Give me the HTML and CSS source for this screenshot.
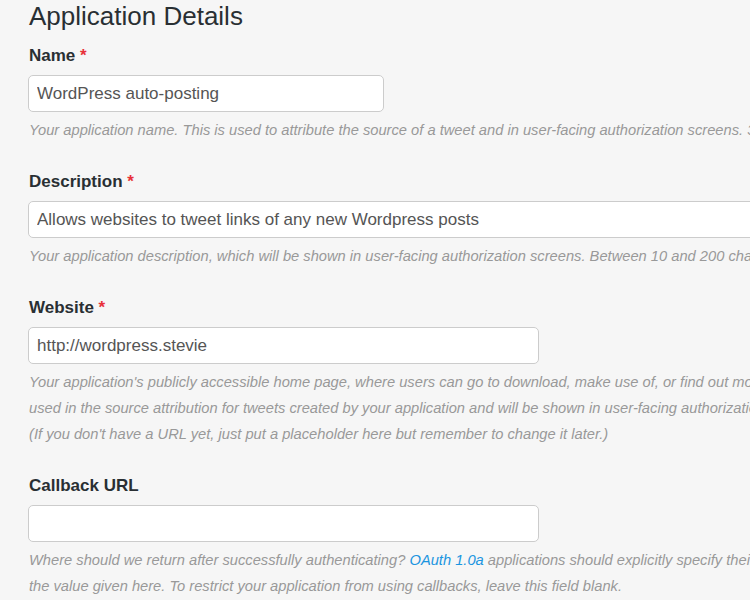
FILE: index.html
```html
<!DOCTYPE html>
<html lang="en">
<head>
<meta charset="utf-8">
<title>Application Details</title>
<link rel="stylesheet" href="styles.css">
</head>
<body>
<div class="page">
  <h1 class="title">Application Details</h1>
  <div class="group">
    <label class="label">Name <span class="req">*</span></label>
    <input class="field field-name" type="text" value="WordPress auto-posting">
    <p class="help">Your application name. This is used to attribute the source of a tweet and in user-facing authorization screens. 32 characters max.</p>
  </div>
  <div class="group">
    <label class="label">Description <span class="req">*</span></label>
    <input class="field field-wide" type="text" value="Allows websites to tweet links of any new Wordpress posts">
    <p class="help">Your application description, which will be shown in user-facing authorization screens. Between 10 and 200 characters max.</p>
  </div>
  <div class="group">
    <label class="label">Website <span class="req">*</span></label>
    <input class="field field-mid" type="text" value="http://wordpress.stevie">
    <p class="help">Your application's publicly accessible home page, where users can go to download, make use of, or find out more information about your application. This fully-qualified URL is<br>used in the source attribution for tweets created by your application and will be shown in user-facing authorization screens.<br>(If you don't have a URL yet, just put a placeholder here but remember to change it later.)</p>
  </div>
  <div class="group">
    <label class="label">Callback URL</label>
    <input class="field field-mid" type="text" value="">
    <p class="help">Where should we return after successfully authenticating? <a class="link" href="#">OAuth 1.0a</a> applications should explicitly specify their oauth_callback URL on the request token step, regardless of<br>the value given here. To restrict your application from using callbacks, leave this field blank.</p>
  </div>
</div>
</body>
</html>
```
FILE: styles.css
```css
html, body {
  margin: 0;
  padding: 0;
  background: #f6f6f6;
  overflow: hidden;
}
.page {
  width: 1400px;
  padding: 0 0 0 28px;
  font-family: "Liberation Sans", Arial, sans-serif;
  color: #333;
}
.title {
  margin: 1px 0 0 1px;
  font-size: 26px;
  line-height: 30px;
  font-weight: normal;
  color: #292f33;
}
.group {
  display: flex;
  flex-direction: column;
  align-items: flex-start;
  margin-top: 13px;
}
.group + .group {
  margin-top: 27px;
}
.label {
  display: block;
  margin-left: 1px;
  font-size: 17px;
  line-height: 24px;
  font-weight: bold;
  color: #292f33;
}
.req {
  color: #e8313a;
  font-weight: bold;
}
.field {
  box-sizing: border-box;
  height: 37px;
  margin: 7px 0 0 0;
  padding: 0 8px;
  border: 1px solid #ccc;
  border-radius: 5px;
  background: #fff;
  font-family: "Liberation Sans", Arial, sans-serif;
  font-size: 17px;
  color: #555;
  outline: none;
}
.field-name { width: 356px; }
.field-mid { width: 511px; }
.field-wide { width: 1000px; }
.help {
  margin: 5px 0 0 1px;
  font-size: 14.7px;
  line-height: 26px;
  font-style: italic;
  color: #999;
  white-space: nowrap;
}
.link {
  color: #1b95e0;
  text-decoration: none;
}
```
